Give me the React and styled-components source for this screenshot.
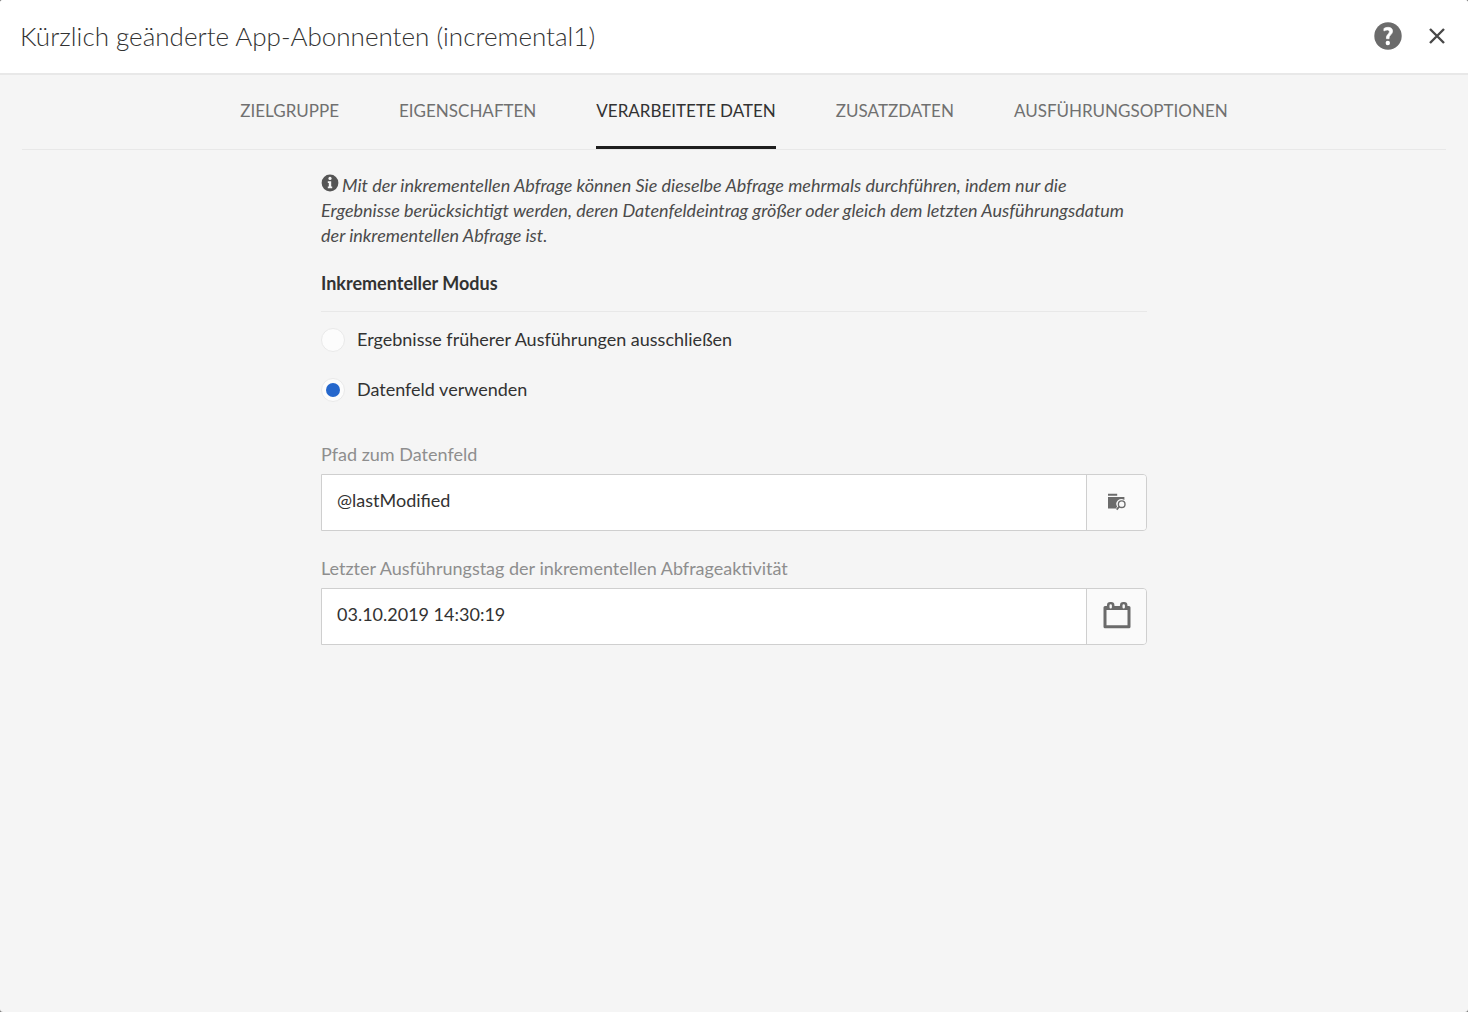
import React, { useState } from 'react';
import styled, { createGlobalStyle } from 'styled-components';

const colors = {
  page: '#f5f5f5',
  white: '#ffffff',
  text: '#323232',
  note: '#4b4b4b',
  muted: '#707070',
  label: '#8e8e8e',
  divider: '#e8e8e8',
  border: '#cfcfcf',
  blue: '#2567cc'
};

const GlobalStyle = createGlobalStyle`
  *, *::before, *::after {
    box-sizing: border-box;
  }

  body {
    margin: 0;
    background: #7a7a7a;
    color: ${colors.text};
    font-family: Lato, 'Open Sans', sans-serif;
    font-size: 18px;
    line-height: 25px;
  }

  button, input {
    font: inherit;
    color: inherit;
  }
`;

const Dialog = styled.div`
  min-height: 100vh;
  border-radius: 3px;
  overflow: hidden;
  background: ${colors.page};
`;

const Header = styled.header`
  display: flex;
  align-items: center;
  justify-content: space-between;
  height: 75px;
  padding: 0 20px 2px;
  background: ${colors.white};
  border-bottom: 2px solid ${colors.divider};
`;

const Title = styled.h1`
  margin: 0;
  font-size: 26px;
  line-height: 36px;
  font-weight: 300;
`;

const HeaderActions = styled.div`
  display: flex;
  align-items: center;
  gap: 24px;
`;

const IconButton = styled.button`
  display: flex;
  padding: 0;
  border: 0;
  background: none;
  cursor: pointer;
`;

const TabList = styled.nav`
  display: flex;
  justify-content: center;
  gap: 60px;
  height: 75px;
  margin: 0 22px;
  border-bottom: 1px solid ${colors.divider};
`;

const Tab = styled.button`
  padding: 0;
  border: 0;
  border-bottom: 3px solid ${({ $active }) => ($active ? '#1e1e1e' : 'transparent')};
  background: none;
  color: ${({ $active }) => ($active ? colors.text : colors.muted)};
  font-size: 17px;
  white-space: nowrap;
  cursor: pointer;
`;

const Content = styled.main`
  width: 100%;
  max-width: 866px;
  margin: 0 auto;
  padding: 23px 20px;
`;

const Note = styled.p`
  margin: 0;
  color: ${colors.note};
  font-style: italic;

  svg {
    margin-right: 3px;
  }
`;

const ModeGroup = styled.fieldset`
  min-width: 0;
  margin: 0 0 40px;
  padding: 0;
  border: 0;
`;

const ModeTitle = styled.legend`
  width: 100%;
  padding: 23px 0 15px;
  border-bottom: 1px solid ${colors.divider};
  font-weight: 700;
`;

const RadioLabel = styled.label`
  display: flex;
  align-items: center;
  gap: 12px;
  height: 25px;
  margin-top: ${({ $first }) => ($first ? '15px' : '25px')};
`;

const Radio = styled.input`
  appearance: none;
  display: grid;
  place-items: center;
  width: 24px;
  height: 24px;
  margin: 0;
  border: 1px solid #e9e9e9;
  border-radius: 50%;
  background: #fcfcfc;

  &:checked::before {
    content: '';
    width: 14px;
    height: 14px;
    border-radius: 50%;
    background: ${colors.blue};
  }
`;

const Field = styled.div`
  margin-bottom: 25px;
`;

const FieldLabel = styled.label`
  display: block;
  margin-bottom: 7px;
  color: ${colors.label};
`;

const InputGroup = styled.div`
  display: flex;
  height: 57px;
  border: 1px solid ${colors.border};
  border-radius: 0 4px 4px 0;
  overflow: hidden;
`;

const TextInput = styled.input`
  flex: 1;
  min-width: 0;
  padding: 0 15px 4px;
  border: 0;
  outline: 0;
  background: ${colors.white};
`;

const PickerButton = styled.button`
  display: flex;
  align-items: center;
  justify-content: center;
  width: 60px;
  padding: 0 0 2px;
  border: 0;
  border-left: 1px solid ${colors.border};
  background: #fafafa;
  cursor: pointer;
`;

const HelpIcon = () => (
  <svg width="28" height="28" viewBox="0 0 28 28" aria-hidden="true">
    <circle cx="14" cy="14" r="13.7" fill="#6b6b6b" />
    <path d="M9.9 6.5c1.2-.8 2.6-1.2 4.2-1.2 2.8 0 4.5 1.5 4.5 3.8 0 3.4-4 4.3-3.5 7.6h-2.7c-.8-3.7 3-4.7 3-7 0-2-2.8-2.1-5.5-.7z" fill="#fff" stroke="#fff" strokeWidth=".6" />
    <circle cx="13.8" cy="21" r="2.2" fill="#fff" />
  </svg>
);

const CloseIcon = () => (
  <svg width="22" height="22" viewBox="0 0 22 22" aria-hidden="true">
    <path d="M4 4 18 18M18 4 4 18" stroke="#484848" strokeWidth="2.4" />
  </svg>
);

const InfoIcon = () => (
  <svg width="18" height="18" viewBox="0 0 18 18" aria-hidden="true">
    <circle cx="9" cy="9" r="8.4" fill="#555" />
    <circle cx="9" cy="4.4" r="1.6" fill="#f5f5f5" />
    <path d="M6.8 7.2h3.4v5.2h1v1.8H6.8v-1.8h1V9h-1z" fill="#f5f5f5" />
  </svg>
);

const FolderSearchIcon = () => (
  <svg width="20" height="18" viewBox="0 0 20 18" aria-hidden="true">
    <path d="M1 .8h9.2v2H1zM1 4h16.4v3.1a5 5 0 0 0-7.3 6.6l-1.3 1.8H1z" fill="#6b6b6b" />
    <circle cx="14.7" cy="11.2" r="3.3" fill="none" stroke="#6b6b6b" strokeWidth="1.4" />
    <path d="m12.2 13.6-2.5 3" stroke="#6b6b6b" strokeWidth="1.8" />
  </svg>
);

const CalendarIcon = () => (
  <svg width="28" height="30" viewBox="0 0 28 30" aria-hidden="true">
    <path d="M2 6.5h24v19.2H2z" fill="none" stroke="#6b6b6b" strokeWidth="3" strokeLinejoin="round" />
    <path d="M2 5h24v4H2z" fill="#6b6b6b" />
    <rect x="4" y="1" width="7.4" height="8" rx="3.2" fill="#6b6b6b" />
    <rect x="17" y="1" width="7.4" height="8" rx="3.2" fill="#6b6b6b" />
    <path d="M7.7 4.4v1.8M20.7 4.4v1.8" stroke="#fafafa" strokeWidth="2.4" strokeLinecap="round" />
  </svg>
);

const tabs = ['ZIELGRUPPE', 'EIGENSCHAFTEN', 'VERARBEITETE DATEN', 'ZUSATZDATEN', 'AUSFÜHRUNGSOPTIONEN'];

const modes = [
  { value: 'exclude', label: 'Ergebnisse früherer Ausführungen ausschließen' },
  { value: 'dateField', label: 'Datenfeld verwenden' }
];

const App = () => {
  const [activeTab, setActiveTab] = useState('VERARBEITETE DATEN');
  const [mode, setMode] = useState('dateField');

  return (
    <>
      <GlobalStyle />
      <Dialog>
        <Header>
          <Title>Kürzlich geänderte App-Abonnenten (incremental1)</Title>
          <HeaderActions>
            <IconButton type="button" aria-label="Hilfe">
              <HelpIcon />
            </IconButton>
            <IconButton type="button" aria-label="Schließen">
              <CloseIcon />
            </IconButton>
          </HeaderActions>
        </Header>

        <TabList>
          {tabs.map((tab) => (
            <Tab key={tab} type="button" $active={tab === activeTab} onClick={() => setActiveTab(tab)}>
              {tab}
            </Tab>
          ))}
        </TabList>

        <Content>
          <Note>
            <InfoIcon />
            Mit der inkrementellen Abfrage können Sie dieselbe Abfrage mehrmals durchführen, indem nur die
            Ergebnisse berücksichtigt werden, deren Datenfeldeintrag größer oder gleich dem letzten
            Ausführungsdatum der inkrementellen Abfrage ist.
          </Note>

          <ModeGroup>
            <ModeTitle>Inkrementeller Modus</ModeTitle>
            {modes.map(({ value, label }, index) => (
              <RadioLabel key={value} $first={index === 0}>
                <Radio
                  type="radio"
                  name="mode"
                  value={value}
                  checked={mode === value}
                  onChange={() => setMode(value)}
                />
                {label}
              </RadioLabel>
            ))}
          </ModeGroup>

          <Field>
            <FieldLabel htmlFor="path">Pfad zum Datenfeld</FieldLabel>
            <InputGroup>
              <TextInput id="path" type="text" defaultValue="@lastModified" />
              <PickerButton type="button" aria-label="Datenfeld auswählen">
                <FolderSearchIcon />
              </PickerButton>
            </InputGroup>
          </Field>

          <Field>
            <FieldLabel htmlFor="lastRun">Letzter Ausführungstag der inkrementellen Abfrageaktivität</FieldLabel>
            <InputGroup>
              <TextInput id="lastRun" type="text" defaultValue="03.10.2019 14:30:19" />
              <PickerButton type="button" aria-label="Datum auswählen">
                <CalendarIcon />
              </PickerButton>
            </InputGroup>
          </Field>
        </Content>
      </Dialog>
    </>
  );
};

export default App;
